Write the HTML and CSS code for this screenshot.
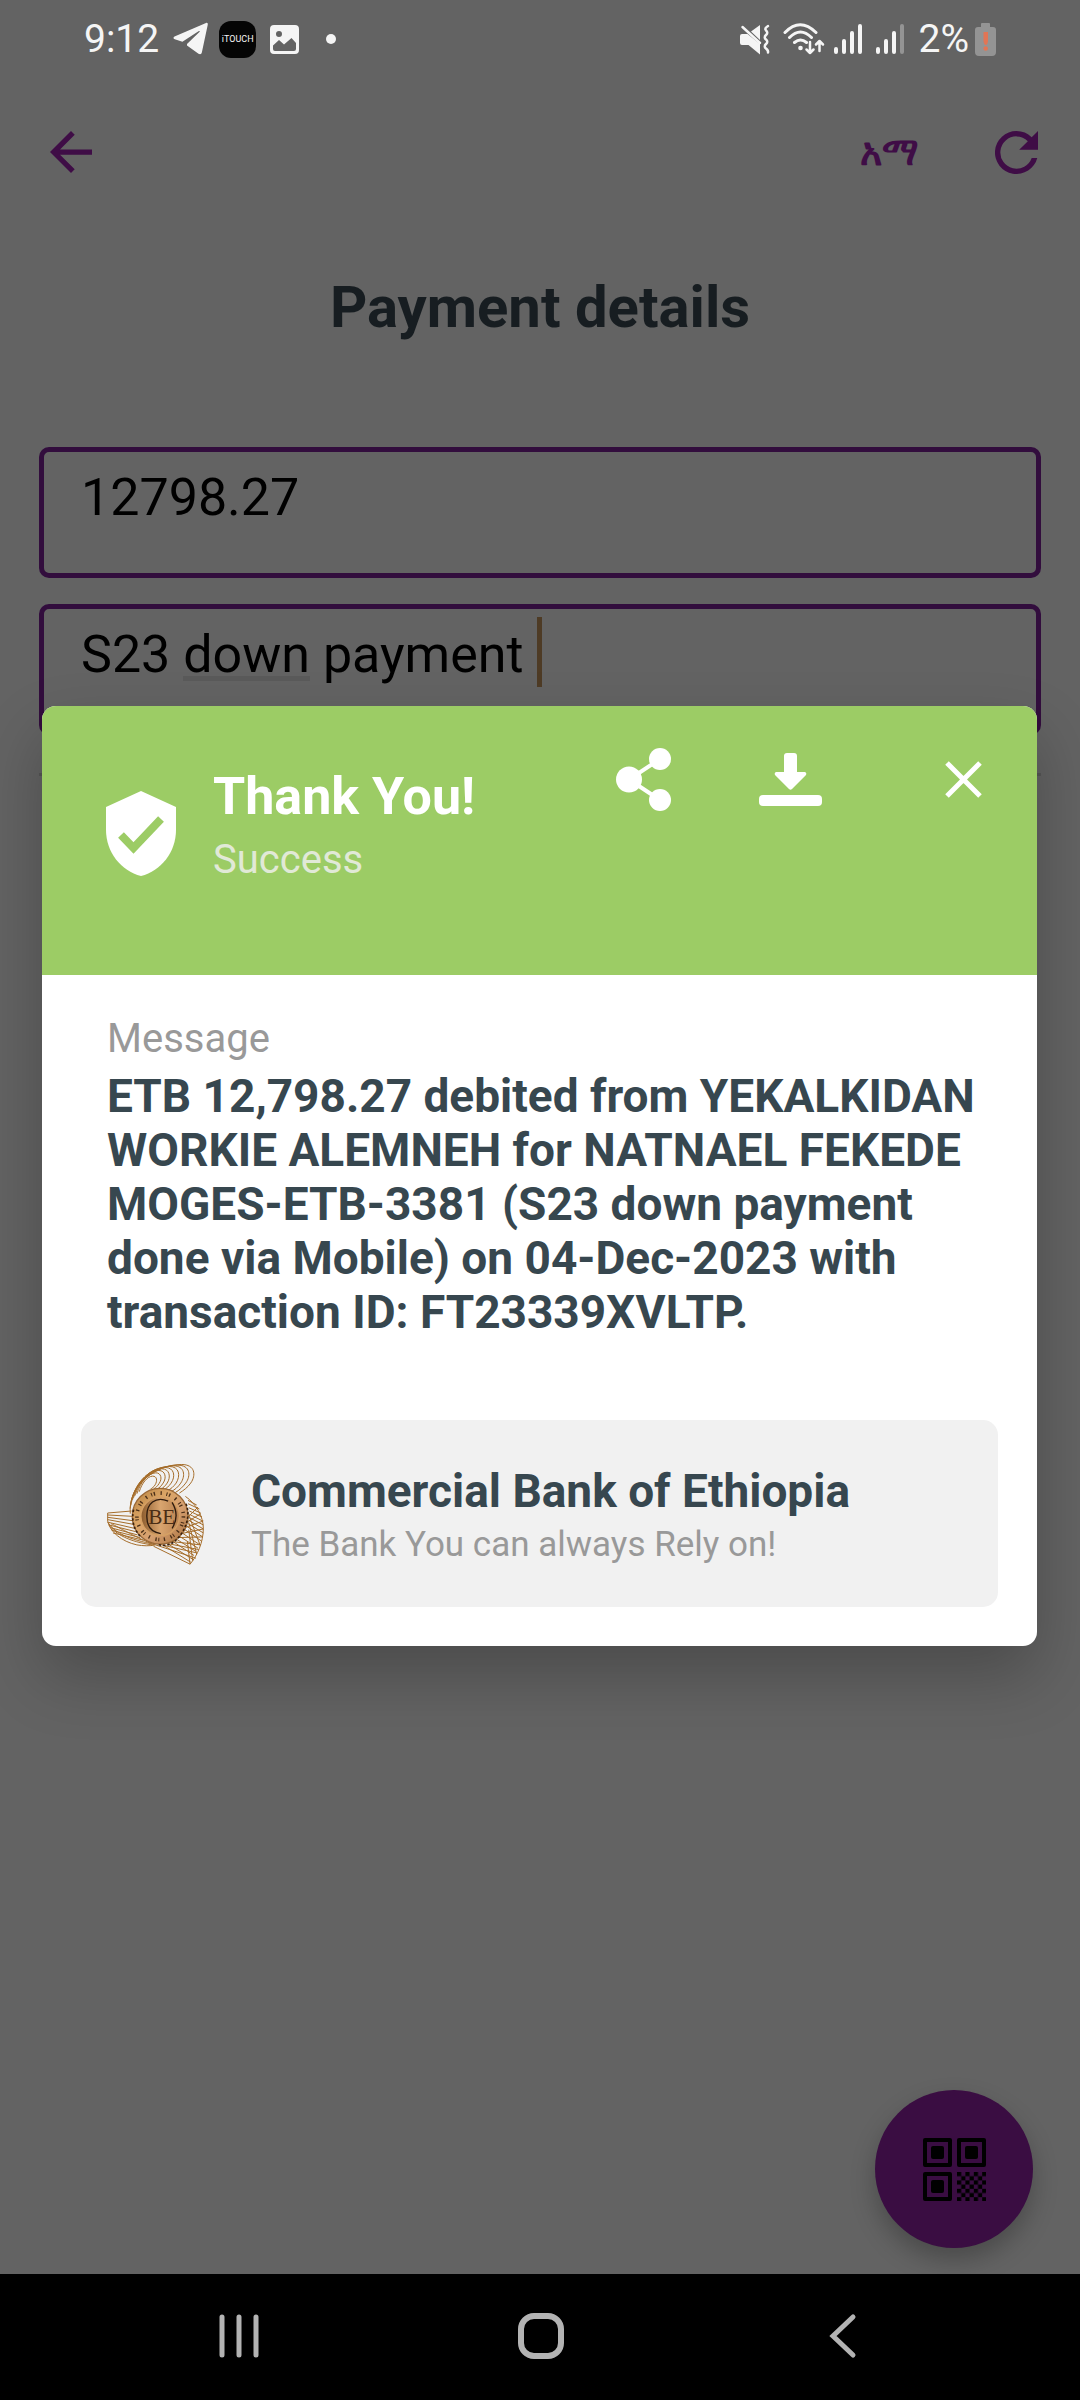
FILE: index.html
```html
<!DOCTYPE html>
<html lang="en">
<head>
<meta charset="utf-8">
<meta name="viewport" content="width=device-width, initial-scale=1">
<title>Payment details</title>
<link rel="stylesheet" href="styles.css">
</head>
<body>
<div class="screen">
  <header class="status">
    <div class="status-group">
      <span class="clock">9:12</span>
      <svg class="s-telegram" width="36" height="34" viewBox="0 0 36 34" aria-hidden="true"><path fill="#f5f5f5" d="M33 1 1.500 14.500c-1.500.8-1.300 2.200.3 2.800l7.600 2.400L25.500 9.300c1.200-.7 1.700-.1.900.7L14 22v1.500l11.500 8.200c1.800 1 3 .4 3.400-1.500L34.700 3c.4-1.800-.4-2.500-1.700-2z"/></svg>
      <span class="s-app">iTOUCH</span>
      <svg class="s-image" width="29" height="29" viewBox="0 0 29 29" aria-hidden="true"><path fill="#f5f5f5" fill-rule="evenodd" d="M4 0h21a4 4 0 0 1 4 4v21a4 4 0 0 1-4 4H4a4 4 0 0 1-4-4V4a4 4 0 0 1 4-4zM3 20.500V24a2 2 0 0 0 2 2h19a2 2 0 0 0 2-2v-6l-4.500-5L14 19.500 9 15zM9 6a3 3 0 1 0 0 6 3 3 0 0 0 0-6z"/></svg>
      <span class="s-dot"></span>
    </div>
    <div class="status-group">
      <svg width="30" height="31" viewBox="0 0 30 31" aria-hidden="true"><path fill="#f5f5f5" d="M2 10h5.500L20 20v10.500L8.500 21H2a2 2 0 0 1-2-2v-7a2 2 0 0 1 2-2zM11 7.500 20 1v15z"/><path d="M2.500 3 20 19" stroke="#f5f5f5" stroke-width="2.500" stroke-linecap="round"/><path d="M28 2q-4 2.300-2 4.500 2.500 2 0 4.500t0 4.500 0 4.500 0 4.500 2 4" fill="none" stroke="#f5f5f5" stroke-width="2.500" stroke-linecap="round"/></svg>
      <svg class="s-wifi" width="42" height="33" viewBox="0 0 42 33" aria-hidden="true"><g fill="none" stroke="#f5f5f5" stroke-width="3" stroke-linecap="round" stroke-linejoin="round"><path d="M2 9.500Q17-6 33 9.500M6.500 14.500q11-11 22 0M11.500 19.500q6-5 12 0"/><path stroke-width="2.500" d="M27 19v11m-3.500-3.500L27 30l3.500-3.500M36.500 28V18M33 21.500l3.500-3.500 3.500 3.500"/></g><circle cx="17.500" cy="25" r="2.300" fill="#f5f5f5"/></svg>
      <svg class="s-signal" width="28" height="30" viewBox="0 0 28 30" aria-hidden="true"><g stroke="#f5f5f5" stroke-width="4" stroke-linecap="round"><path d="M2 25v3M10 17v11M18 9v19M26 2v26"/></g></svg>
      <svg class="s-signal2" width="28" height="30" viewBox="0 0 28 30" aria-hidden="true"><g stroke="#f5f5f5" stroke-width="4" stroke-linecap="round"><path d="M2 25v3M10 17v11M18 9v19"/><path stroke="#949494" d="M26 2v26"/></g></svg>
      <span class="percent">2%</span>
      <svg class="s-battery" width="21" height="33" viewBox="0 0 21 33" aria-hidden="true"><path fill="#949494" d="M7 0h7a1 1 0 0 1 1 1v3h3a3 3 0 0 1 3 3v22a4 4 0 0 1-4 4H4a4 4 0 0 1-4-4V7a3 3 0 0 1 3-3h3V1a1 1 0 0 1 1-1z"/><path fill="#e27555" d="M8.500 9h4.500v9q-.5 4-2.200 4T8.500 18z"/><circle cx="10.700" cy="25.500" r="2.300" fill="#e27555"/></svg>
    </div>
  </header>

  <nav class="toolbar" aria-label="Page">
    <button class="icon-btn" type="button" aria-label="Back"><svg width="42" height="42" viewBox="4 4 16 16"><path fill="#3f0d46" d="M20 11H7.830l5.590-5.590L12 4l-8 8 8 8 1.410-1.410L7.830 13H20z"/></svg></button>
    <div class="toolbar-end">
      <button class="lang" type="button" lang="am">አማ</button>
      <button class="icon-btn" type="button" aria-label="Refresh"><svg width="43" height="43" viewBox="4 4 16 16"><path fill="#3f0d46" d="M17.650 6.350A7.960 7.960 0 0 0 12 4a8 8 0 1 0 7.730 10h-2.080A6 6 0 1 1 12 6c1.660 0 3.140.69 4.220 1.780L13 11h7V4z"/></svg></button>
    </div>
  </nav>

  <main class="page">
    <h1>Payment details</h1>
    <form class="form">
      <input class="field" type="text" aria-label="Amount" value="12798.27">
      <input class="field field-active" type="text" aria-label="Reason" value="S23 down payment ">
      <hr>
    </form>
    <button class="fab" type="button" aria-label="Scan QR code">
      <svg width="63" height="63" viewBox="0 0 63 63">
        <defs><pattern id="check" width="8.400" height="8.400" patternUnits="userSpaceOnUse" x="34" y="34"><path d="M0 0h4.200v4.200H0zM4.200 4.200h4.200v4.200H4.200z"/></pattern></defs>
        <g fill="none" stroke="#000" stroke-width="4" stroke-linejoin="round"><path d="M2 2h25v25H2zM36 2h25v25H36zM2 36h25v25H2z"/></g>
        <rect x="8" y="8" width="13" height="13" rx="2"/><rect x="42" y="8" width="13" height="13" rx="2"/><rect x="8" y="42" width="13" height="13" rx="2"/>
        <rect x="34" y="34" width="29" height="29" fill="url(#check)"/>
      </svg>
    </button>
  </main>

  <footer class="sysnav">
    <button type="button" aria-label="Recent apps"><svg width="46" height="46" viewBox="0 0 46 46"><path d="M6 4v38M23 4v38M40 4v38" stroke="#b3b3b3" stroke-width="5" stroke-linecap="round"/></svg></button>
    <button type="button" aria-label="Home"><svg width="46" height="46" viewBox="0 0 46 46"><rect x="3" y="3" width="40" height="40" rx="13" fill="none" stroke="#b3b3b3" stroke-width="6"/></svg></button>
    <button type="button" aria-label="Back"><svg width="46" height="46" viewBox="0 0 46 46"><path d="M33 4 13 23l20 19" fill="none" stroke="#b3b3b3" stroke-width="5" stroke-linecap="round"/></svg></button>
  </footer>

  <div class="overlay">
    <section class="dialog" role="dialog" aria-labelledby="dialog-title">
      <div class="dialog-head">
        <svg class="shield" width="70" height="85" viewBox="0 0 70 85" aria-hidden="true"><path fill="#fff" d="M35 0 70 16v23c0 22-15 41-35 46C15 80 0 61 0 39V16z"/><path d="m15 44 12.500 13L55 28" fill="none" stroke="#9ccc65" stroke-width="8"/></svg>
        <div class="dialog-title">
          <h2 id="dialog-title">Thank You!</h2>
          <p>Success</p>
        </div>
        <div class="actions">
          <button type="button" aria-label="Share"><svg width="63" height="63" viewBox="0 0 63 63"><path d="M48 11 17 31.500 48 52" fill="none" stroke="#fff" stroke-width="4"/><circle cx="17" cy="31.500" r="13" fill="#fff"/><circle cx="48" cy="11" r="11" fill="#fff"/><circle cx="48" cy="52" r="11" fill="#fff"/></svg></button>
          <button type="button" aria-label="Download"><svg width="63" height="63" viewBox="0 0 63 63"><path fill="#fff" d="M28 5h7q3 0 3 3v16h8q2 1 1 3L33 41q-1.500 1.500-3 0L16 27q-1-2 1-3h8V8q0-3 3-3z"/><rect y="47" width="63" height="11" rx="4" fill="#fff"/></svg></button>
          <button class="close" type="button" aria-label="Close"><svg width="63" height="63" viewBox="0 0 63 63"><path d="m15 15 33 33M48 15 15 48" stroke="#fff" stroke-width="5"/></svg></button>
        </div>
      </div>
      <div class="dialog-body">
        <div class="message">
          <p class="caption">Message</p>
          <p class="text">ETB 12,798.27 debited from YEKALKIDAN WORKIE ALEMNEH for NATNAEL FEKEDE MOGES-ETB-3381 (S23 down payment done via Mobile) on 04-Dec-2023 with transaction ID: FT23339XVLTP.</p>
        </div>
        <div class="bank">
          <svg class="bank-logo" width="97" height="102" viewBox="50 128 292 306" aria-hidden="true">
            <defs><linearGradient id="coin" x1="0" y1="0" x2="1" y2="1"><stop offset="0" stop-color="#b5813f"/><stop offset=".35" stop-color="#dba566"/><stop offset=".6" stop-color="#d6a071"/><stop offset="1" stop-color="#a8703c"/></linearGradient>
            <linearGradient id="core"><stop offset="0" stop-color="#8a5a2c"/><stop offset=".5" stop-color="#d9a56f"/><stop offset="1" stop-color="#b98250"/></linearGradient></defs>
            <g fill="none" stroke="#a56c2a" stroke-width="3">
              <path d="M120 280C112 190 200 132 275 132c40 0 44 32 27 56-10 14-22 22-34 30"/>
              <path d="M120 265c2-75 80-131 143-131 38 0 40 32 24 54-9 12-20 22-31 28"/>
              <path d="M122 255c5-68 70-119 128-119 34 0 37 30 22 52-8 12-18 20-28 25"/>
              <path d="M124 245c8-60 60-107 114-107 30 0 34 28 20 50-7 10-16 18-25 22"/>
              <path d="M127 238c10-54 54-96 98-97 28 0 32 27 18 47-7 10-14 16-22 20"/>
              <path d="M130 232c12-48 48-86 85-87 24 0 28 25 16 43-6 9-12 15-20 18"/>
              <path d="M134 226c12-40 42-75 72-76 20 0 24 22 13 38-6 9-11 14-18 18"/>
              <path d="M140 220c10-34 34-62 57-63 16 0 20 18 10 32-5 8-10 13-16 16"/>
              <path d="M147 214c8-26 24-46 40-47 14 0 15 14 8 26-4 7-9 10-14 13"/>
              <path d="M52 278l72-6M52 284l74 4M52 291l75 10M52 298l77 14M54 306l78 18M56 314l80 20M60 322l82 22M64 330l86 22M68 338l92 22M52 278v24c6 32 42 62 88 72 18 3 38 4 56 0M52 305c20 32 60 52 144 68M56 314c20 28 60 50 130 60M62 310c26 12 60 34 130 64"/>
              <path d="M286 228c32 22 54 60 54 96 0 42-18 82-40 108M294 240l26 14M294 250l34 16M296 262l36 16M298 272l38 18M298 282l40 20M298 292l42 22M296 300l44 26M294 310l46 28M290 318l48 32M284 328l50 34M276 338l54 36M268 348l56 36M258 356l60 38M246 362l66 44M232 370l74 46M218 374l84 52M190 378l110 54M196 374l122 40M214 374l106 24M232 370l94 18M246 364l86 10M262 352l76-2M274 340l66-14M284 322l56-20M290 306l42-26M294 290l30-30M300 432l-8-68M308 422l-12-94M320 402l-24-96M330 374l-34-90"/>
            </g>
            <circle cx="210" cy="288" r="84" fill="url(#coin)" stroke="#9a6836" stroke-width="4"/>
            <path d="M130 268q-10 48 20 80M288 250q16 44-14 90t-74 32" fill="none" stroke="#38200e" stroke-width="5" stroke-dasharray="7 6"/>
            <circle cx="210" cy="288" r="70" fill="none" stroke="#4a2f18" stroke-width="11" stroke-dasharray="4 14 3 5 4 17"/>
            <circle cx="210" cy="288" r="58" fill="url(#core)" stroke="#d5a064" stroke-width="4"/>
            <path d="M246 246q24 40 0 78M234 242c-38-16-66 8-64 48 0 28 14 46 42 50" fill="none" stroke="#2e1b0d" stroke-width="4"/>
            <text class="coin-text" x="174" y="310">BE</text>
          </svg>
          <div class="bank-info">
            <p class="bank-name">Commercial Bank of Ethiopia</p>
            <p class="bank-motto">The Bank You can always Rely on!</p>
          </div>
        </div>
      </div>
    </section>
  </div>
</div>
</body>
</html>
```
FILE: styles.css
```css
* { box-sizing: border-box; }
body { margin: 0; font-family: Roboto, "Liberation Sans", sans-serif; background: #636363; }
h1, h2, p { margin: 0; }
button { padding: 0; border: 0; background: none; font: inherit; color: inherit; display: flex; align-items: center; justify-content: center; }
svg { display: block; flex: none; }

.screen { position: relative; min-height: 100vh; display: flex; flex-direction: column; }

.status { display: flex; justify-content: space-between; height: 78px; padding: 0 84px; color: #f5f5f5; }
.status-group { display: flex; align-items: center; }
.clock, .percent { font-size: 39px; line-height: 78px; }
.s-telegram { margin-left: 14px; }
.s-app { width: 37px; height: 37px; margin: 0 14px 0 10px; border-radius: 12px; background: #050505; font-size: 9px; line-height: 36px; text-align: center; }
.s-dot { width: 10px; height: 10px; margin-left: 27px; border-radius: 50%; background: #f5f5f5; }
.s-wifi { margin: 0 9px 0 13px; }
.s-signal2 { margin: 0 15px 0 14px; }
.s-battery { margin-left: 6px; }

.toolbar { display: flex; justify-content: space-between; align-items: center; height: 148px; padding: 0 42px 0 50px; color: #3f0d46; }
.toolbar-end { display: flex; align-items: center; gap: 76px; }
.lang { font-size: 38px; font-weight: 700; line-height: 48px; }

.page { flex: 1; display: flex; flex-direction: column; padding: 45px 39px 26px; }
h1 { text-align: center; font-size: 58px; line-height: 72px; font-weight: 700; color: #171d21; }
.form { display: flex; flex-direction: column; gap: 26px; margin-top: 104px; }
.field { width: 100%; height: 131px; padding: 15px 37px 45px; border: 5px solid #320d3d; border-radius: 10px; background: transparent; color: #000; font: 52px/61px Roboto, "Liberation Sans", sans-serif; outline: 0; }
.field-active {
  background-image: linear-gradient(#4e3b25, #4e3b25), linear-gradient(#5a5a5a, #5a5a5a);
  background-size: 5px 70px, 127px 5px;
  background-position: 493px 8px, 139px 67px;
  background-repeat: no-repeat;
}
hr { width: 100%; margin: 12px 0 0; border: 0; border-top: 3px solid #555; }
.fab { align-self: flex-end; width: 158px; height: 158px; margin: auto 8px 0 0; border-radius: 50%; background: #3a0d42; box-shadow: 0 12px 24px rgba(0, 0, 0, .25); }

.sysnav { display: flex; justify-content: space-around; align-items: center; height: 126px; padding: 0 86px 2px 88px; background: #000; }

.overlay { position: absolute; inset: 78px 0 126px; display: flex; align-items: center; padding: 0 43px 0 42px; }
.dialog { flex: 1; overflow: hidden; border-radius: 14px; background: #fff; box-shadow: 0 30px 64px rgba(0, 0, 0, .24); }
.dialog-head { display: flex; align-items: flex-start; padding: 42px 42px 90px 64px; background: #9ccc65; color: #fff; }
.shield { margin-top: 43px; }
.dialog-title { flex: 1; margin: 18px 0 0 37px; }
h2 { font-size: 52px; line-height: 61px; font-weight: 700; }
.dialog-title p { margin-top: 8px; font-size: 40px; line-height: 50px; color: #e1e9d7; }
.actions { display: flex; gap: 84px; }
.close { margin-left: 26px; }

.dialog-body { padding: 39px; }
.message { padding: 0 14px 0 26px; }
.caption { font-size: 40px; line-height: 50px; color: #999; }
.text { margin-top: 5px; font-size: 46px; line-height: 54px; font-weight: 700; color: #37474f; }
.bank { display: flex; align-items: center; gap: 47px; height: 187px; margin-top: 81px; padding: 0 26px; border-radius: 15px; background: #f1f1f1; }
.bank-info { padding-top: 4px; }
.bank-name { font-size: 46px; line-height: 54px; font-weight: 700; color: #37474f; }
.bank-motto { margin-top: 5px; font-size: 35px; line-height: 44px; color: #999; }
.coin-text { font: 64px "Liberation Serif", serif; fill: #4a2d15; }
```
